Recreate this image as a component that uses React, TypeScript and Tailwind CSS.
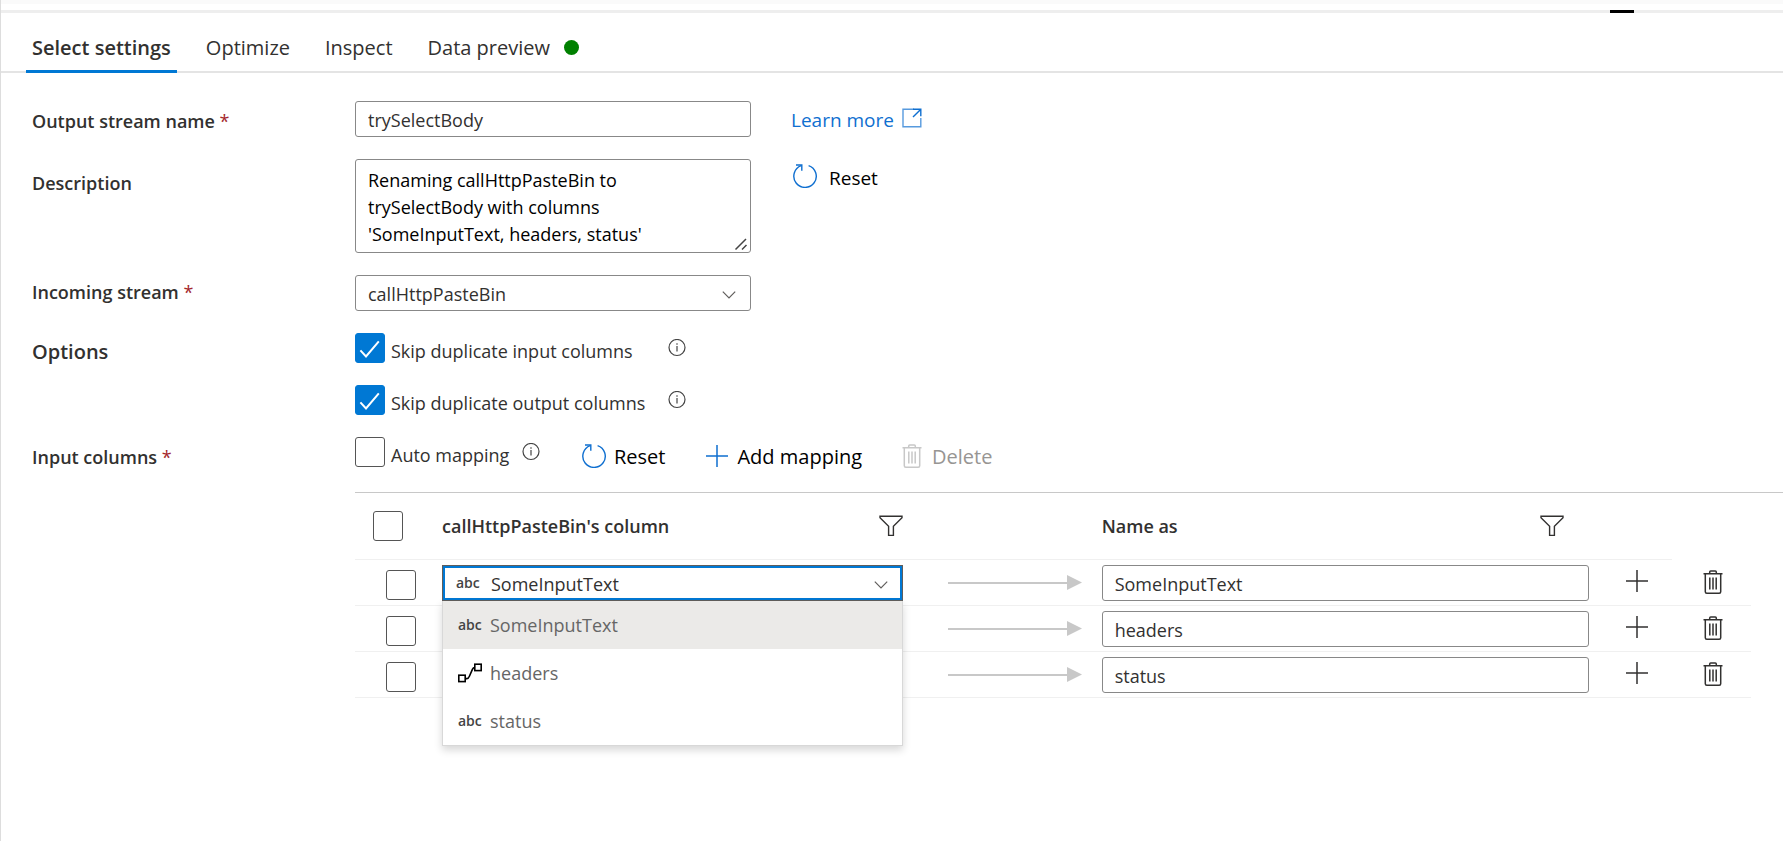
import { useState } from "react";
import type { ReactNode } from "react";

type ColumnType = "string" | "complex";

type Mapping = {
  id: number;
  source: string;
  target: string;
};

const columns: { name: string; type: ColumnType }[] = [
  { name: "SomeInputText", type: "string" },
  { name: "headers", type: "complex" },
  { name: "status", type: "string" },
];

const mappings: Mapping[] = [
  { id: 1, source: "SomeInputText", target: "SomeInputText" },
  { id: 2, source: "headers", target: "headers" },
  { id: 3, source: "status", target: "status" },
];

const tabs = ["Select settings", "Optimize", "Inspect", "Data preview"];

function ResetIcon() {
  return (
    <svg className="h-6 w-6 shrink-0 text-[#0f6fd0]" viewBox="0 0 24 24" fill="none" stroke="currentColor" strokeWidth="1.4" aria-hidden="true">
      <path d="M15.6 1.6A11.2 11.2 0 1 1 8.2 1.7" />
      <path d="M3 1h5.8v5.8" />
    </svg>
  );
}

function PlusIcon() {
  return (
    <svg className="h-6 w-6 shrink-0" viewBox="0 0 24 24" fill="none" stroke="currentColor" strokeWidth="1.5" aria-hidden="true">
      <path d="M12 1v22M1 12h22" />
    </svg>
  );
}

function TrashIcon() {
  return (
    <svg className="h-6 w-5 shrink-0" viewBox="0 0 20 24" fill="none" stroke="currentColor" strokeWidth="1.5" aria-hidden="true">
      <path d="M0.5 3.8h19M6.7 3.5V2q0-1 1-1h4.6q1 0 1 1v1.5" />
      <path d="M2.3 4v17.7q0 1.5 1.5 1.5h12.4q1.5 0 1.5-1.5V4" />
      <path d="M6.8 7.5v12M10 7.5v12M13.2 7.5v12" />
    </svg>
  );
}

function InfoIcon() {
  return (
    <svg className="h-[18px] w-[18px] shrink-0 text-[#444444]" viewBox="0 0 18 18" fill="none" stroke="currentColor" strokeWidth="1.2" role="img" aria-label="Info">
      <circle cx="9" cy="8.5" r="8" />
      <path d="M9 7.1v5.4M9 4.3v1.4" />
    </svg>
  );
}

function FilterIcon() {
  return (
    <svg className="h-[22px] w-6 shrink-0" viewBox="0 0 24 22" fill="none" stroke="currentColor" strokeWidth="1.4" aria-hidden="true">
      <path d="M1 1.2h22v1.6l-8.6 8.4v9.2H9.6v-9.2L1 2.8z" />
    </svg>
  );
}

function ChevronIcon() {
  return (
    <svg className="pointer-events-none absolute top-1/2 right-3.5 h-4 w-4 -translate-y-1/2 text-[#605e5c]" viewBox="0 0 16 16" fill="none" stroke="currentColor" strokeWidth="1.2" aria-hidden="true">
      <path d="M1.8 6.6 8 12.8l6.2-6.2" />
    </svg>
  );
}

function TypeIcon({ type }: { type: ColumnType }) {
  if (type === "complex") {
    return (
      <svg className="h-5 w-6 shrink-0 text-black" viewBox="0 0 24 20" fill="none" stroke="currentColor" strokeWidth="1.6" aria-hidden="true">
        <rect x="0.8" y="12.2" width="6.4" height="6.4" />
        <rect x="16.8" y="1.2" width="6.4" height="6.4" />
        <path d="M7.2 15.6h1.6c1.4 0 2-1 2.6-2.4l3-6.8c.5-1.2 1-1.8 2.4-1.8" />
      </svg>
    );
  }
  return <span className="w-6 text-sm leading-6 font-semibold text-[#444444]">abc</span>;
}

function Checkbox({ label, defaultChecked = false }: { label: string; defaultChecked?: boolean }) {
  return (
    <span className="relative block h-[30px] w-[30px] shrink-0">
      <input
        type="checkbox"
        aria-label={label}
        defaultChecked={defaultChecked}
        className="peer block h-[30px] w-[30px] appearance-none rounded-[3px] border border-[#555555] bg-white checked:border-[#0078d4] checked:bg-[#0078d4]"
      />
      <svg className="pointer-events-none absolute inset-0 hidden h-[30px] w-[30px] text-white peer-checked:block" viewBox="0 0 30 30" fill="none" stroke="currentColor" strokeWidth="2" aria-hidden="true">
        <path d="M5.4 17.4 11 23.4 23.8 8.4" />
      </svg>
    </span>
  );
}

function Option({ label, defaultChecked, className = "" }: { label: string; defaultChecked?: boolean; className?: string }) {
  return (
    <div className="flex items-center">
      <label className={`flex items-end gap-1.5 ${className}`}>
        <Checkbox label={label} defaultChecked={defaultChecked} />
        <span>{label}</span>
      </label>
      <InfoIcon />
    </div>
  );
}

function Field({ label, htmlFor, required, labelClass = "pt-2", children }: { label: string; htmlFor?: string; required?: boolean; labelClass?: string; children: ReactNode }) {
  return (
    <div className="flex items-start">
      <label htmlFor={htmlFor} className={`w-[323px] shrink-0 font-semibold ${labelClass}`}>
        {label}
        {required && <span className="font-normal text-[#a4262c]"> *</span>}
      </label>
      {children}
    </div>
  );
}

function Arrow() {
  return (
    <div className="flex items-center pr-5 pl-[45px]">
      <div className="h-0.5 flex-1 bg-[#c8c8c8]" />
      <svg className="h-[15px] w-[15px] text-[#c8c8c8]" viewBox="0 0 15 15" fill="currentColor" aria-hidden="true">
        <path d="M0 0 15 7.5 0 15z" />
      </svg>
    </div>
  );
}

function SourceSelect({ mapping, open }: { mapping: Mapping; open: boolean }) {
  const [value, setValue] = useState(mapping.source);
  const type = columns.find((column) => column.name === value)?.type ?? "string";

  return (
    <div className="relative">
      <span className="pointer-events-none absolute inset-y-0 left-3.5 flex items-center">
        <TypeIcon type={type} />
      </span>
      <select
        aria-label={`Source column ${mapping.id}`}
        value={value}
        onChange={(event) => setValue(event.target.value)}
        className={`block h-9 w-full appearance-none bg-transparent pt-0.5 pl-12 outline-none ${
          open ? "border border-[#605e5c] ring-2 ring-[#0078d4] ring-inset" : "rounded-[3px] border border-[#888888]"
        }`}
      >
        {columns.map((column) => (
          <option key={column.name}>{column.name}</option>
        ))}
      </select>
      <ChevronIcon />
      {open && (
        <ul role="listbox" className="absolute inset-x-0 top-full z-10 border border-t-0 border-[#d8d8d8] bg-white text-[#666666] shadow-[0_4px_8px_rgba(0,0,0,0.16)]">
          {columns.map((column) => (
            <li
              key={column.name}
              role="option"
              aria-selected={column.name === value}
              className={`flex h-12 items-center gap-2 pl-[15px] ${column.name === value ? "bg-[#ebeae8]" : ""}`}
            >
              <TypeIcon type={column.type} />
              {column.name}
            </li>
          ))}
        </ul>
      )}
    </div>
  );
}

export default function App() {
  const [activeTab, setActiveTab] = useState(tabs[0]);

  return (
    <div className="min-h-screen overflow-x-hidden border-l border-[#dddddd] bg-white font-['Open_Sans','Noto_Sans',sans-serif] text-lg leading-6 text-[#323130]">
      <div className="h-1 bg-[#fafafa]" />
      <div className="mt-1.5 flex h-[3px] justify-end bg-[#eeeeee] pr-[149px]">
        <div className="w-6 bg-black" />
      </div>

      <nav role="tablist" className="flex h-[60px] gap-[23px] border-b-2 border-[#e4e4e4] pl-[25px]">
        {tabs.map((tab) => (
          <button
            key={tab}
            type="button"
            role="tab"
            aria-selected={tab === activeTab}
            onClick={() => setActiveTab(tab)}
            className={`-mb-0.5 flex items-center gap-3.5 border-b-[3px] px-1.5 pt-3 text-xl leading-7 ${
              tab === activeTab ? "border-[#0078d4] font-semibold" : "border-transparent"
            }`}
          >
            {tab}
            {tab === "Data preview" && <span className="h-[15px] w-[15px] rounded-full bg-[#008000]" />}
          </button>
        ))}
      </nav>

      <form className="flex flex-col gap-[22px] pt-7 pl-[31px]">
        <Field label="Output stream name" htmlFor="stream-name" required>
          <input id="stream-name" defaultValue="trySelectBody" className="h-9 w-[396px] rounded-[3px] border border-[#888888] px-3 pt-0.5 outline-none" />
          <a href="#learn-more" className="ml-10 flex gap-2 pt-[7px] text-[19px] text-[#0f6fd0]">
            Learn more
            <svg className="h-5 w-5" viewBox="0 0 20 20" fill="none" stroke="currentColor" strokeWidth="1.4" aria-hidden="true">
              <path d="M12 1.2H1v17.6h17.8V10" opacity="0.7" />
              <path d="M11 1.2h7.8v7M18.6 1.4 11 9" />
            </svg>
          </a>
        </Field>

        <Field label="Description" htmlFor="description" labelClass="pt-3">
          <div className="relative">
            <textarea
              id="description"
              defaultValue="Renaming callHttpPasteBin to trySelectBody with columns 'SomeInputText, headers, status'"
              className="block h-[94px] w-[396px] resize-none overflow-hidden rounded-[3px] border border-[#888888] py-[7px] pr-10 pl-3 leading-[27px] text-black outline-none"
            />
            <svg className="pointer-events-none absolute right-[3px] bottom-0.5 h-3.5 w-3.5 text-[#444444]" viewBox="0 0 14 14" fill="none" stroke="currentColor" strokeWidth="1.5" aria-hidden="true">
              <path d="M1.5 12.5 12 2M8 12.5 12.5 8" />
            </svg>
          </div>
          <button type="button" className="ml-[42px] flex gap-3 pt-[5px] text-[19px] text-black">
            <ResetIcon />
            <span className="pt-0.5">Reset</span>
          </button>
        </Field>

        <Field label="Incoming stream" htmlFor="incoming-stream" required labelClass="pt-[5px]">
          <div className="relative w-[396px]">
            <select id="incoming-stream" className="block h-9 w-full appearance-none rounded-[3px] border border-[#888888] px-3 pt-0.5 outline-none">
              <option>callHttpPasteBin</option>
            </select>
            <ChevronIcon />
          </div>
        </Field>

        <Field label="Options" labelClass="pt-[7px] text-xl leading-6">
          <div className="flex flex-col gap-[22px]">
            <Option label="Skip duplicate input columns" defaultChecked className="w-[313px]" />
            <Option label="Skip duplicate output columns" defaultChecked className="w-[313px]" />
          </div>
        </Field>

        <Field label="Input columns" required>
          <div className="min-w-0 flex-1">
            <div className="flex h-[30px] items-start">
              <Option label="Auto mapping" className="w-[167px]" />
              <div className="flex gap-10 pt-[7px] pl-[42px] text-xl leading-6 text-black">
                <button type="button" className="flex gap-2">
                  <ResetIcon />
                  <span className="pt-px">Reset</span>
                </button>
                <button type="button" className="flex gap-2">
                  <span className="text-[#0f6fd0]">
                    <PlusIcon />
                  </span>
                  <span className="pt-px">Add mapping</span>
                </button>
                <button type="button" disabled className="flex gap-2.5 text-[#979593]">
                  <span className="text-[#c8c8c8]">
                    <TrashIcon />
                  </span>
                  <span className="pt-px">Delete</span>
                </button>
              </div>
            </div>

            <div className="mt-[25px] border-t border-[#c8c8c8] pr-8">
              <table className="w-full table-fixed border-separate border-spacing-0">
                <colgroup>
                  <col className="w-[87px]" />
                  <col className="w-[33%]" />
                  <col className="w-[199px]" />
                  <col />
                  <col className="w-[83px]" />
                  <col className="w-[79px]" />
                </colgroup>
                <thead>
                  <tr className="h-[67px] text-left [&>*]:border-b [&>*]:border-[#f0f0f0] [&>*:last-child]:border-b-0">
                    <td className="pl-[18px]">
                      <Checkbox label="Select all rows" />
                    </td>
                    <th className="font-semibold">
                      <div className="flex items-center justify-between">
                        callHttpPasteBin's column
                        <button type="button" aria-label="Filter source columns">
                          <FilterIcon />
                        </button>
                      </div>
                    </th>
                    <td />
                    <th className="pr-[25px] font-semibold">
                      <div className="flex items-center justify-between">
                        Name as
                        <button type="button" aria-label="Filter target names">
                          <FilterIcon />
                        </button>
                      </div>
                    </th>
                    <td />
                    <td />
                  </tr>
                </thead>
                <tbody>
                  {mappings.map((mapping, index) => (
                    <tr key={mapping.id} className="h-[46px] align-top [&>td]:border-b [&>td]:border-[#f0f0f0]">
                      <td className="pt-2.5 pl-[31px]">
                        <Checkbox label={`Select row ${mapping.id}`} />
                      </td>
                      <td className="pt-[5px]">
                        <SourceSelect mapping={mapping} open={index === 0} />
                      </td>
                      <td className="align-middle">
                        <Arrow />
                      </td>
                      <td className="pt-[5px]">
                        <input
                          aria-label={`Name as ${mapping.id}`}
                          defaultValue={mapping.target}
                          className="block h-9 w-full rounded-[3px] border border-[#888888] px-3 pt-0.5 outline-none"
                        />
                      </td>
                      <td className="pt-[9px] pl-9">
                        <button type="button" aria-label="Add row" className="block">
                          <PlusIcon />
                        </button>
                      </td>
                      <td className="pt-2.5 pl-[31px]">
                        <button type="button" aria-label="Delete row" className="block">
                          <TrashIcon />
                        </button>
                      </td>
                    </tr>
                  ))}
                </tbody>
              </table>
            </div>
          </div>
        </Field>
      </form>
    </div>
  );
}
